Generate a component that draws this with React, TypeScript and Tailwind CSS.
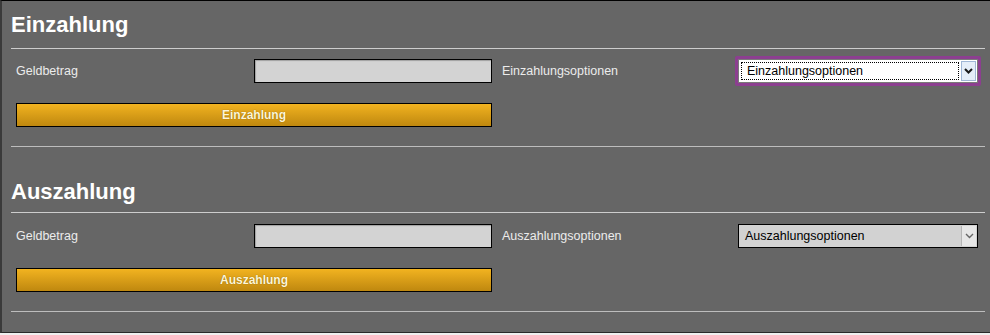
import React from "react";

type Section = {
  title: string;
  optionsLabel: string;
  focused: boolean;
  headingTop: string;
  headingGap: string;
  rowGap: string;
};

const sections: Section[] = [
  { title: "Einzahlung", optionsLabel: "Einzahlungsoptionen", focused: true, headingTop: "mt-[12px]", headingGap: "mt-[11px]", rowGap: "mt-[10px]" },
  { title: "Auszahlung", optionsLabel: "Auszahlungsoptionen", focused: false, headingTop: "mt-[33px]", headingGap: "mt-[8px]", rowGap: "mt-[11px]" },
];

const Chevron = ({ bold }: { bold: boolean }) => (
  <svg width="9" height="6" viewBox="0 0 9 6">
    <path
      d="M1 1 L4.5 4.5 L8 1"
      fill="none"
      stroke={bold ? "#1a1a1a" : "#666"}
      strokeWidth={bold ? 2 : 1.4}
    />
  </svg>
);

const FakeSelect = ({ label, focused }: { label: string; focused: boolean }) =>
  focused ? (
    <div className="relative h-[24px] w-[240px]">
      <div className="absolute inset-[-3px] rounded-[2px] bg-[#8c3f90]" />
      <div className="relative flex h-full items-center border border-[#7a7a7a] bg-white">
        <div className="ml-[2px] flex h-[18px] flex-1 items-center border border-dotted border-black pl-[5px] text-[12.5px] text-black">
          {label}
        </div>
        <div className="ml-[2px] mr-[1px] flex h-[20px] w-[15px] items-center justify-center border border-[#9fb6d6] bg-[#e4edf8]">
          <Chevron bold />
        </div>
      </div>
    </div>
  ) : (
    <div className="flex h-[24px] w-[240px] items-center border border-black bg-[#d2d2d2]">
      <div className="flex-1 pl-[6px] text-[12.5px] text-black">{label}</div>
      <div className="mr-[1px] flex h-[20px] w-[15px] items-center justify-center border-l border-[#b5b5b5] bg-[#e6e6e6]">
        <Chevron bold={false} />
      </div>
    </div>
  );

export default function App() {
  return (
    <div className="min-h-[335px] bg-[#f0f0f0]" style={{ fontFamily: '"Liberation Sans", Arial, sans-serif' }}>
      <div className="w-[990px] border-t border-b border-l-2 border-t-black border-b-[#2a2a2a] border-l-[#3a3a3a] bg-[#666666] pb-[20px] pl-[9px] pr-[5px]">
        {sections.map((s) => (
          <div key={s.title}>
            <h2 className={`${s.headingTop} text-[22px] font-bold leading-[24px] text-white`}>{s.title}</h2>
            <div className={`${s.headingGap} border-t border-[#cdcdcd]`} />

            <div className={`${s.rowGap} grid grid-cols-[243px_238px_246px_240px] items-center`}>
              <div className="pl-[5px] text-[12.5px] text-[#ececec]">Geldbetrag</div>
              <div className="h-[24px] w-[238px] border border-black bg-[#d3d3d3] shadow-[inset_1px_1px_1px_#a0a0a0]" />
              <div className="pl-[10px] text-[12.5px] text-[#ececec]">{s.optionsLabel}</div>
              <FakeSelect label={s.optionsLabel} focused={s.focused} />
            </div>

            <div className="mt-[20px] grid grid-cols-[243px_238px_246px_240px]">
              <button className="col-span-2 ml-[5px] h-[24px] border border-black bg-gradient-to-b from-[#f2b320] to-[#bf880f] text-[12px] font-bold text-[#fff6d6] [text-shadow:0_0_1px_#7a5500]">
                {s.title}
              </button>
            </div>

            <div className="mt-[19px] border-t border-[#bdbdbd]" />
          </div>
        ))}
      </div>
    </div>
  );
}
